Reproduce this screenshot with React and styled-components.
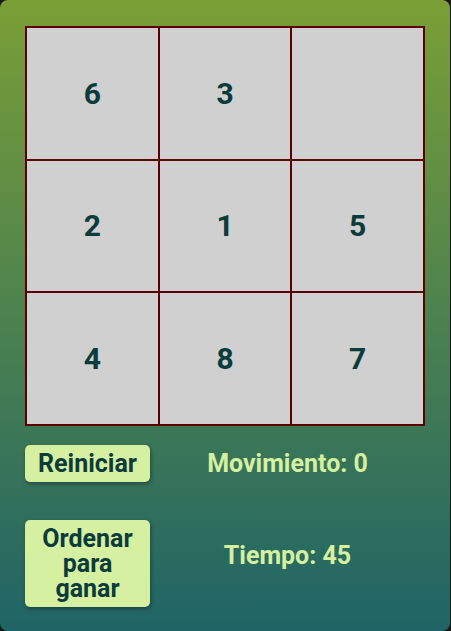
import React, { useState } from 'react'
import styled, { createGlobalStyle } from 'styled-components'

const GlobalStyle = createGlobalStyle`
    html, body {
        margin: 0;
        padding: 0;
        background: #181818;
    }
    * {
        box-sizing: border-box;
    }
`

const initialTiles = [6, 3, null, 2, 1, 5, 4, 8, 7]

const App = () => {
    const [tiles] = useState(initialTiles)
    const [moves] = useState(0)
    const [time] = useState(45)

    return (
        <>
            <GlobalStyle />
            <Wrapper>
                <Board>
                    {tiles.map((n, i) => (
                        <Tile key={i}>{n}</Tile>
                    ))}
                </Board>
                <Controls>
                    <Button>Reiniciar</Button>
                    <Label>Movimiento: {moves}</Label>
                    <Button>Ordenar para ganar</Button>
                    <Label $top>Tiempo: {time}</Label>
                </Controls>
            </Wrapper>
        </>
    )
}

const Wrapper = styled.main`
    width: 450px;
    height: 100vh;
    padding: 26px 25px 24px 25px;
    border-radius: 8px;
    background: linear-gradient(180deg, #7a9f36 0%, #1f6466 100%);
    font-family: Roboto, "Liberation Sans", sans-serif;
`

const Board = styled.div`
    width: 400px;
    height: 400px;
    display: grid;
    grid-template-columns: repeat(3, 1fr);
    grid-template-rows: repeat(3, 1fr);
    border: 1px solid #5a0000;
`

const Tile = styled.div`
    display: flex;
    align-items: center;
    justify-content: center;
    background: #d0d0d0;
    border: 1px solid #5a0000;
    color: #0b3b3b;
    font-size: 30px;
    font-weight: 700;
`

const Controls = styled.div`
    margin-top: 19px;
    width: 400px;
    display: grid;
    grid-template-columns: 125px 1fr;
    row-gap: 38px;
`

const Button = styled.button`
    width: 125px;
    padding: 6px 6px;
    border: none;
    border-radius: 5px;
    background: #d5f0a0;
    color: #0b3b3b;
    font-family: Roboto, "Liberation Sans", sans-serif;
    font-size: 25px;
    font-weight: 700;
    line-height: 25px;
    box-shadow: 1px 2px 4px rgba(0, 0, 0, 0.35);
    cursor: pointer;
`

const Label = styled.div`
    align-self: ${p => (p.$top ? 'start' : 'center')};
    padding-top: ${p => (p.$top ? '22px' : '0')};
    text-align: center;
    color: #d5f0a0;
    font-size: 25px;
    font-weight: 700;
    line-height: 28px;
`

export default App
